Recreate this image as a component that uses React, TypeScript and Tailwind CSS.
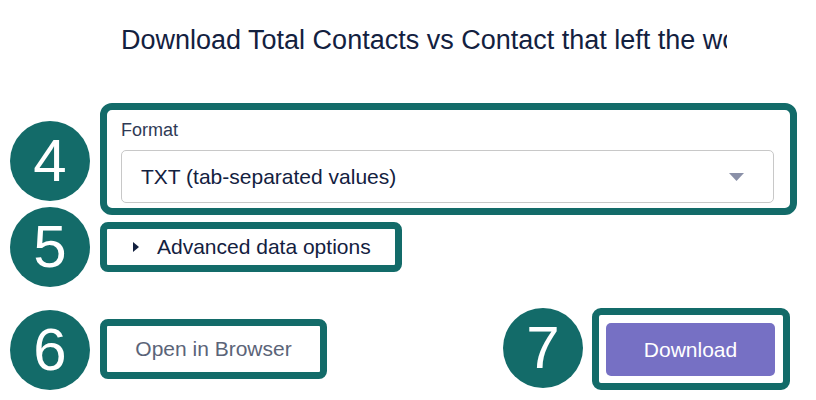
import React from 'react'

// Annotation bubble laid over the screenshot (numbered step markers)
const Step: React.FC<{ n: number; className: string }> = ({ n, className }) => (
  <div
    className={`absolute w-[80px] h-[80px] rounded-full bg-[#136b69] text-white flex items-center justify-center text-[60px] leading-none ${className}`}
  >
    {n}
  </div>
)

export default function App() {
  return (
    <div className="relative w-[816px] h-[400px] overflow-hidden bg-white font-['Liberation_Sans',Arial,sans-serif]">
      {/* Dialog title, clipped by the modal edge */}
      <div className="ml-[121px] w-[606px] overflow-hidden whitespace-nowrap pt-[23px] text-[27px] leading-[34px] text-[#13213f]">
        Download Total Contacts vs Contact that left the workspace
      </div>

      <div className="ml-[100px] w-[697px]">
        {/* Format select */}
        <div className="mt-[46px] border-[7px] border-[#136b69] rounded-[12px] pl-[14px] pr-[16px] pt-[9px] pb-[5px]">
          <div className="text-[18px] leading-[22px] text-[#2f3a55]">Format</div>
          <div className="mt-[9px] h-[53px] border-[1.5px] border-[#c8c8c8] rounded-[5px] flex items-center justify-between pl-[19px] pr-[29px]">
            <span className="text-[21px] text-[#13213f]">TXT (tab-separated values)</span>
            <svg width="15" height="8" viewBox="0 0 15 8">
              <polygon points="0,0 15,0 7.5,8" fill="#8a90a8" />
            </svg>
          </div>
        </div>

        {/* Advanced options toggle */}
        <div className="mt-[7px] w-[302px] h-[50px] border-[7px] border-[#136b69] rounded-[8px] flex items-center pl-[26px]">
          <svg width="6" height="10" viewBox="0 0 6 10" className="mr-[18px]">
            <polygon points="0,0 6,5 0,10" fill="#13213f" />
          </svg>
          <span className="text-[21px] text-[#13213f]">Advanced data options</span>
        </div>

        {/* Action row */}
        <div className="mt-[36px] w-[690px] flex items-center justify-between">
          <div className="w-[227px] h-[60px] border-[7px] border-[#136b69] rounded-[8px] flex items-center justify-center">
            <span className="text-[21px] text-[#5b6478]">Open in Browser</span>
          </div>
          <div className="w-[198px] h-[82px] border-[7px] border-[#136b69] rounded-[9px] pl-[7px] pr-[8px] pt-[8px] pb-[7px]">
            <button className="w-full h-full rounded-[5px] bg-[#7670c4] text-white text-[21px]">Download</button>
          </div>
        </div>
      </div>

      <Step n={4} className="left-[10px] top-[121px]" />
      <Step n={5} className="left-[10px] top-[207px]" />
      <Step n={6} className="left-[10px] top-[310px]" />
      <Step n={7} className="left-[503px] top-[308px]" />
    </div>
  )
}
